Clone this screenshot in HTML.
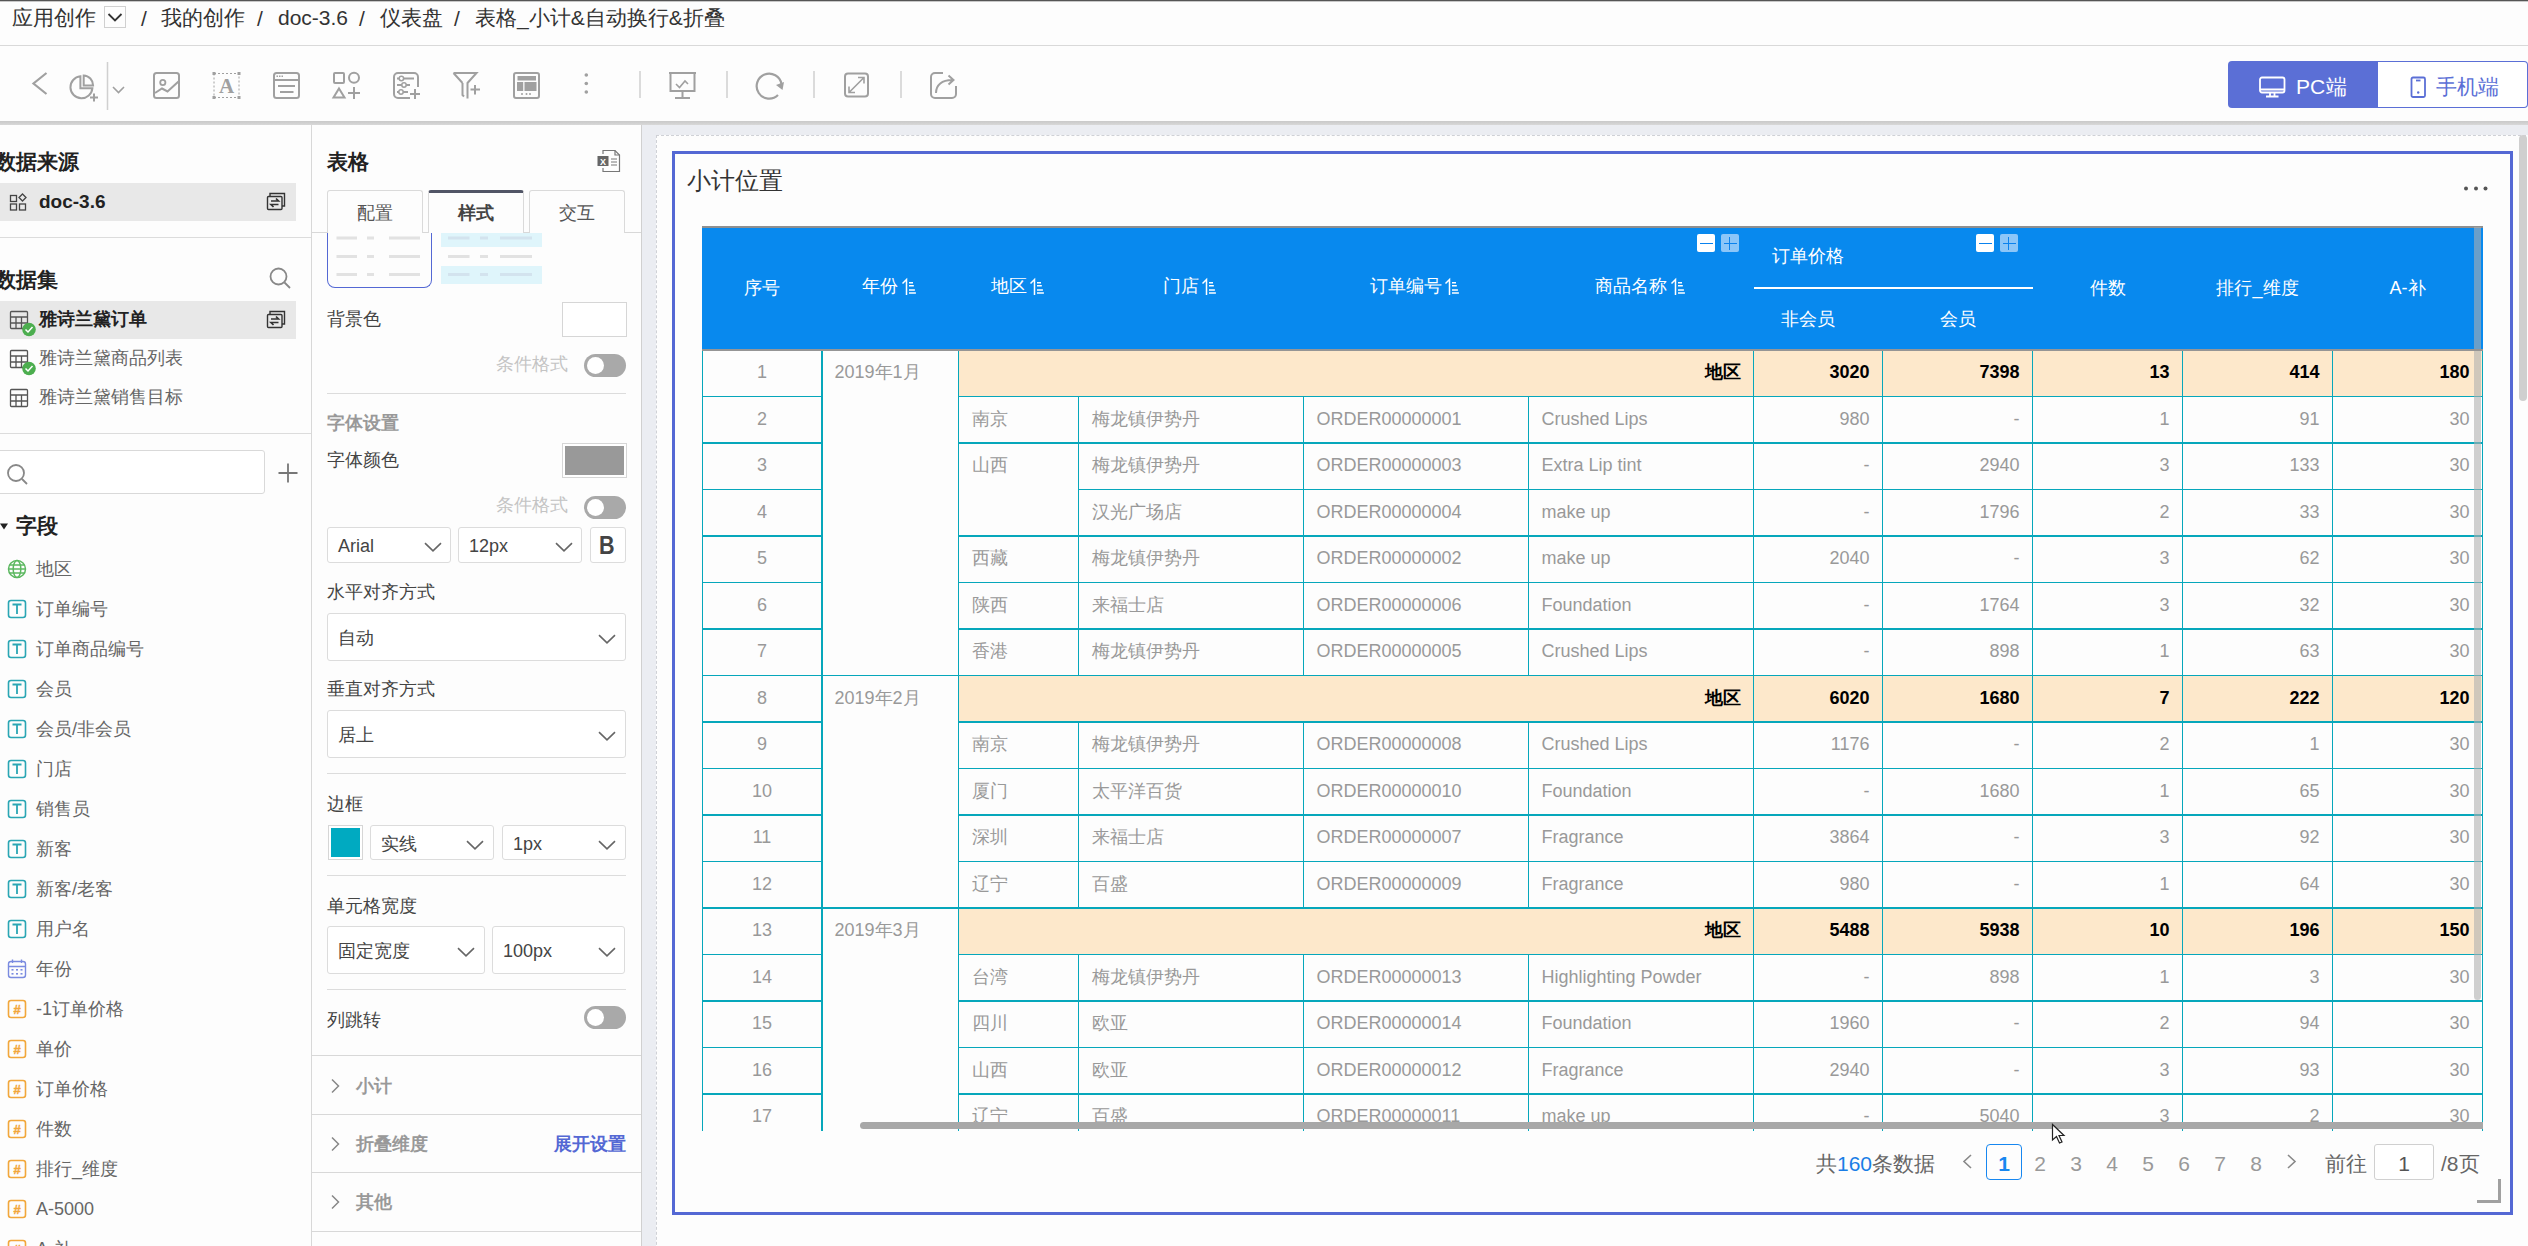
<!DOCTYPE html>
<html><head><meta charset="utf-8">
<style>
html,body{margin:0;padding:0;}
body{width:2528px;height:1246px;overflow:hidden;position:relative;background:#fdfdfd;font-family:"Liberation Sans",sans-serif;color:#333;}
.a{position:absolute;}
.t{position:absolute;white-space:nowrap;line-height:1;}
svg{position:absolute;overflow:visible;}
.ic{stroke:#a0a0a0;fill:none;stroke-width:2;}
.sep{position:absolute;width:2px;background:#d6d6d6;}
/* panels */
.hl{position:absolute;height:1px;background:#dcdcdc;}
.fld{position:absolute;left:36px;font-size:18px;color:#666;white-space:nowrap;line-height:1;}
.sel{position:absolute;border:1px solid #dcdcdc;border-radius:3px;background:#fff;box-sizing:border-box;}
.sel span{position:absolute;left:10px;top:50%;transform:translateY(-50%);font-size:18px;color:#555;line-height:1;}
.chev{position:absolute;width:10px;height:10px;border-right:2px solid #666;border-bottom:2px solid #666;transform:rotate(45deg);}
.lbl{position:absolute;left:327px;font-size:18px;color:#444;line-height:1;white-space:nowrap;}
.tog{position:absolute;left:584px;width:42px;height:23px;border-radius:12px;background:#a9a9a9;}
.tog::after{content:"";position:absolute;left:3px;top:3px;width:17px;height:17px;border-radius:50%;background:#fff;}
/* table */
.vl{position:absolute;width:1px;background:#06a7bb;}
.rl{position:absolute;height:1px;background:#06a7bb;}
.c{position:absolute;font-size:18px;color:#999;white-space:nowrap;line-height:46px;height:46px;}
.r{text-align:right;}
.b{font-weight:bold;color:#000;}
.h{position:absolute;font-size:18px;color:#fff;white-space:nowrap;line-height:1;}
</style></head>
<body>
<!-- TOPBAR -->
<div class="a" style="left:0;top:0;width:2528px;height:1px;background:#555"></div>
<div class="a" style="left:0;top:1px;width:2528px;height:1px;background:#c8c8c8"></div>
<div class="t" style="left:12px;top:7px;font-size:21px;color:#333">应用创作</div>
<div class="a" style="left:104px;top:6px;width:20px;height:20px;border:1px solid #d0d0d0"></div><svg style="left:104px;top:6px" width="22" height="22" viewBox="0 0 22 22"><path d="M4.5 8 L11 14.5 L17.5 8" fill="none" stroke="#333" stroke-width="1.8"/></svg>
<div class="t" style="left:141px;top:8px;font-size:21px;color:#333">/</div>
<div class="t" style="left:161px;top:7px;font-size:21px;color:#333">我的创作</div>
<div class="t" style="left:257px;top:8px;font-size:21px;color:#333">/</div>
<div class="t" style="left:278px;top:7px;font-size:21px;color:#333">doc-3.6</div>
<div class="t" style="left:359px;top:8px;font-size:21px;color:#333">/</div>
<div class="t" style="left:380px;top:7px;font-size:21px;color:#333">仪表盘</div>
<div class="t" style="left:454px;top:8px;font-size:21px;color:#333">/</div>
<div class="t" style="left:475px;top:7px;font-size:21px;color:#333">表格_小计&amp;自动换行&amp;折叠</div>
<div class="a" style="left:0;top:45px;width:2528px;height:1px;background:#d9d9d9"></div>

<!-- TOOLBAR placeholder -->
<svg style="left:0;top:0" width="2528" height="125" viewBox="0 0 2528 125">
<g stroke="#a0a0a0" fill="none" stroke-width="2" stroke-linecap="butt">
<!-- back -->
<path d="M46.5 73 L33.5 83.5 L46.5 94" stroke-width="2.2"/>
<!-- pie + -->
<path d="M80.4 76.3 V88.2 H92.4 A11 11 0 1 1 80.4 76.3 Z"/>
<path d="M83.7 75.5 V85.5 H93.1 A9.6 10 0 0 0 83.7 75.5 Z"/>
<path d="M94 93.5 V101.5 M90 97.5 H98"/>
<!-- chevron -->
<path d="M113 87 L118.5 92.5 L124 87" stroke-width="1.6"/>
<!-- image -->
<rect x="154" y="73" width="25" height="25" rx="2.5"/>
<circle cx="162.8" cy="82.5" r="2.6" stroke-width="1.8"/>
<path d="M155 93 L162 88.5 L167.5 91.5 L178.5 81.5"/>
<!-- text A -->
<rect x="214" y="73.5" width="25" height="24" stroke-width="1" stroke-dasharray="2 2"/>
<!-- list -->
<rect x="274" y="73" width="25" height="25" rx="2.5"/>
<path d="M274 80 H299 M278 86 H295 M280 92 H293.5"/>
<!-- shapes -->
<rect x="334" y="73" width="10" height="10" rx="1"/>
<circle cx="354" cy="77.7" r="5"/>
<path d="M339 88.5 L344.5 97.5 H333.5 Z"/>
<path d="M354 87 V99 M348 93 H360"/>
<!-- sliders -->
<path d="M410 98 H398 A4 4 0 0 1 394 94 V77 A4 4 0 0 1 398 73 H414 A4 4 0 0 1 418 77 V87"/>
<path d="M397 78.5 H414 M397 85 H410 M397 92 H408" stroke-width="1.8"/>
<path d="M415 89 V99 M410 94 H420"/>
<!-- filter -->
<path d="M453.5 73 H476.5 L467.5 83 V98.5 M462.5 83 V95 L464 96.5 M453.5 73 L462.5 83"/>
<path d="M475 85 V94.5 M470.5 89.5 H480"/>
<!-- layout -->
<rect x="514" y="73" width="25" height="25" rx="2"/>
<!-- separators -->
<path d="M107.5 62 V110 M640 71 V98 M727 71 V98 M814 71 V98 M901 71 V98" stroke="#d0d0d0" stroke-width="1.5"/>
<!-- present -->
<path d="M669 73 H696 M670.5 73 V91 H694.5 V73 M682.5 91 V97 M675 98 H690"/>
<path d="M676 84 L679.5 87.5 L685 81 L688 84" stroke-width="1.6"/>
<!-- refresh -->
<path d="M781.5 84 A12.5 12.5 0 1 0 778 95" stroke-width="2.2"/>
<!-- expand -->
<rect x="845" y="73.5" width="23" height="23" rx="3"/>
<path d="M849 92.5 L864 77.5 M858 77.5 H864 V83.5 M849 86.5 V92.5 H855" stroke-width="1.6"/>
<!-- share -->
<path d="M943 73 H935 A4 4 0 0 0 931 77 V94 A4 4 0 0 0 935 98 H952 A4 4 0 0 0 956 94 V86"/>
<path d="M936 93 C936 85 942 80 952 80 M948.5 75.5 L953.5 80 L948.5 84.5"/>
</g>
<g fill="#a0a0a0">
<path d="M784 82 L776 85 L782.5 90 Z"/>
<rect x="517.5" y="76" width="18.5" height="4.5"/>
<rect x="517" y="82" width="6.2" height="9"/>
<rect x="524.5" y="82" width="12" height="9"/>
<circle cx="522" cy="94" r="1"/><circle cx="526.5" cy="94" r="1"/><circle cx="530" cy="94" r="1"/>
<circle cx="586.3" cy="75" r="1.8"/><circle cx="586.3" cy="83.5" r="1.8"/><circle cx="586.3" cy="92" r="1.8"/>
<circle cx="401.4" cy="78.5" r="2.2" fill="#fff" stroke="#a0a0a0" stroke-width="1.5"/>
<circle cx="404" cy="85" r="2.2" fill="#fff" stroke="#a0a0a0" stroke-width="1.5"/>
<circle cx="401" cy="92" r="2.2" fill="#fff" stroke="#a0a0a0" stroke-width="1.5"/>
<rect x="212.5" y="72" width="3" height="3"/><rect x="237.5" y="72" width="3" height="3"/>
<rect x="212.5" y="96" width="3" height="3"/><rect x="237.5" y="96" width="3" height="3"/>
<rect x="276.5" y="75.5" width="1.5" height="1.5"/><rect x="279" y="75.5" width="1.5" height="1.5"/><rect x="281.5" y="75.5" width="1.5" height="1.5"/>
</g>
<text x="226.5" y="93" font-family="Liberation Serif" font-weight="bold" font-size="21" fill="#a0a0a0" text-anchor="middle">A</text>
</svg>
<div class="a" style="left:2228px;top:61px;width:150px;height:47px;background:#5b6fd6;border-radius:4px 0 0 4px"></div>
<div class="a" style="left:2378px;top:61px;width:150px;height:47px;border:1px solid #5b6fd6;border-left:none;border-radius:0 4px 4px 0;box-sizing:border-box;background:#fff"></div>
<svg style="left:2255px;top:74px" width="35" height="25" viewBox="0 0 35 25">
<g fill="none" stroke="#fff" stroke-width="1.8"><rect x="5" y="3.5" width="24.5" height="15" rx="2"/><path d="M5 15.5 H29.5 M15 19 V22 M19.5 19 V22 M11 22.5 H23.5"/></g></svg>
<div class="t" style="left:2296px;top:76px;font-size:21px;color:#fff;word-spacing:-5px">PC 端</div>
<svg style="left:2405px;top:74px" width="25" height="25" viewBox="0 0 25 25">
<g fill="none" stroke="#5b6fd6" stroke-width="1.8"><rect x="6.5" y="3.5" width="13.5" height="19.5" rx="1.5"/><path d="M11 6.5 H15.5"/></g><circle cx="13.2" cy="18.5" r="1.2" fill="#5b6fd6"/></svg>
<div class="t" style="left:2436px;top:76px;font-size:21px;color:#5b6fd6">手机端</div>

<div class="a" style="left:0;top:121px;width:2528px;height:4px;background:linear-gradient(#c9c9c9,#d8d8d8)"></div>

<!-- LEFT PANEL -->
<div class="a" style="left:0;top:125px;width:311px;height:1121px;background:#fdfdfd"></div>
<div class="a" style="left:311px;top:125px;width:1px;height:1121px;background:#d8d8d8"></div>
<div class="t" style="left:-5px;top:151px;font-size:21px;font-weight:bold;color:#222">数据来源</div>
<div class="a" style="left:0;top:183px;width:296px;height:38px;background:#e8e8e8"></div>
<svg style="left:0;top:180px" width="40" height="40" viewBox="0 0 40 40">
<g fill="none" stroke="#444" stroke-width="1.3"><rect x="10.5" y="15.5" width="6" height="6"/><rect x="10.5" y="24" width="6" height="6"/><rect x="19.5" y="24" width="6" height="6"/><path d="M22.5 14 L26 17.5 L22.5 21 L19 17.5 Z"/></g></svg>
<div class="t" style="left:39px;top:192px;font-size:19px;font-weight:bold;color:#222">doc-3.6</div>
<svg style="left:262px;top:188px" width="28" height="28" viewBox="0 0 28 28">
<g fill="none" stroke="#333" stroke-width="1.4"><path d="M8 8 V5.5 H22.5 V18 H20"/><rect x="5.5" y="8.5" width="14.5" height="13" rx="1"/><path d="M9 13 H16.5 L14 10.5 M16.5 16.5 H9 L11.5 19" stroke-width="1.7"/></g></svg>
<div class="a" style="left:0;top:237px;width:311px;height:1px;background:#dcdcdc"></div>
<div class="t" style="left:-5px;top:269px;font-size:21px;font-weight:bold;color:#222">数据集</div>
<svg style="left:266px;top:264px" width="28" height="28" viewBox="0 0 28 28">
<g fill="none" stroke="#888" stroke-width="1.8"><circle cx="12.5" cy="12.5" r="8"/><path d="M18.5 18.5 L24 24"/></g></svg>
<div class="a" style="left:0;top:301px;width:296px;height:38px;background:#e8e8e8"></div>
<svg style="left:0;top:300px" width="40" height="120" viewBox="0 0 40 120">
<g fill="none" stroke="#555" stroke-width="1.3">
<rect x="10.5" y="11.5" width="17" height="17" rx="1"/><path d="M10.5 17 H27.5 M10.5 23 H27.5 M16 17 V28.5 M21.5 17 V28.5"/>
<rect x="10.5" y="50.5" width="17" height="17" rx="1"/><path d="M10.5 56 H27.5 M10.5 62 H27.5 M16 56 V67.5 M21.5 56 V67.5"/>
<rect x="10.5" y="89.5" width="17" height="17" rx="1"/><path d="M10.5 95 H27.5 M10.5 101 H27.5 M16 95 V106.5 M21.5 95 V106.5"/>
</g>
<circle cx="29" cy="29.5" r="6.8" fill="#4cae4f"/><path d="M25.5 29.5 L28 32 L32.5 27" stroke="#fff" stroke-width="1.5" fill="none"/>
<circle cx="29" cy="68.5" r="6.8" fill="#4cae4f"/><path d="M25.5 68.5 L28 71 L32.5 66" stroke="#fff" stroke-width="1.5" fill="none"/>
</svg>
<div class="t" style="left:39px;top:310px;font-size:18px;font-weight:bold;color:#222">雅诗兰黛订单</div>
<svg style="left:262px;top:306px" width="28" height="28" viewBox="0 0 28 28">
<g fill="none" stroke="#333" stroke-width="1.4"><path d="M8 8 V5.5 H22.5 V18 H20"/><rect x="5.5" y="8.5" width="14.5" height="13" rx="1"/><path d="M9 13 H16.5 L14 10.5 M16.5 16.5 H9 L11.5 19" stroke-width="1.7"/></g></svg>
<div class="t" style="left:39px;top:349px;font-size:18px;color:#666">雅诗兰黛商品列表</div>
<div class="t" style="left:39px;top:388px;font-size:18px;color:#666">雅诗兰黛销售目标</div>
<div class="a" style="left:0;top:433px;width:311px;height:1px;background:#dcdcdc"></div>
<div class="a" style="left:-5px;top:450px;width:270px;height:44px;border:1px solid #d9d9d9;border-radius:3px;box-sizing:border-box;background:#fff"></div>
<svg style="left:0;top:458px" width="32" height="32" viewBox="0 0 32 32">
<g fill="none" stroke="#888" stroke-width="1.8"><circle cx="16" cy="15" r="8"/><path d="M22 21 L27 26"/></g></svg>
<svg style="left:272px;top:458px" width="32" height="32" viewBox="0 0 32 32">
<path d="M16 5.5 V24.5 M6.5 15 H25.5" stroke="#777" stroke-width="1.8" fill="none"/></svg>
<svg style="left:0;top:518px" width="12" height="16" viewBox="0 0 12 16"><path d="M0 5.5 H8 L4 11.5 Z" fill="#222"/></svg>
<div class="t" style="left:16px;top:515px;font-size:21px;font-weight:bold;color:#222">字段</div>
<div class="fld" style="top:560px">地区</div>
<svg style="left:0;top:549px" width="40" height="40" viewBox="0 0 40 40"><g fill="none" stroke="#5cb860" stroke-width="1.5"><circle cx="17" cy="20" r="8.5"/><ellipse cx="17" cy="20" rx="3.8" ry="8.5"/><path d="M8.5 20 H25.5 M9.5 16 H24.5 M9.5 24 H24.5"/></g></svg>
<div class="fld" style="top:600px">订单编号</div>
<svg style="left:0;top:589px" width="40" height="40" viewBox="0 0 40 40"><rect x="8.5" y="11.5" width="17" height="17" rx="2.5" fill="none" stroke="#2aa6b4" stroke-width="1.6"/><path d="M12.5 15.5 H21.5 M17 15.5 V25" stroke="#2aa6b4" stroke-width="1.8" fill="none"/></svg>
<div class="fld" style="top:640px">订单商品编号</div>
<svg style="left:0;top:629px" width="40" height="40" viewBox="0 0 40 40"><rect x="8.5" y="11.5" width="17" height="17" rx="2.5" fill="none" stroke="#2aa6b4" stroke-width="1.6"/><path d="M12.5 15.5 H21.5 M17 15.5 V25" stroke="#2aa6b4" stroke-width="1.8" fill="none"/></svg>
<div class="fld" style="top:680px">会员</div>
<svg style="left:0;top:669px" width="40" height="40" viewBox="0 0 40 40"><rect x="8.5" y="11.5" width="17" height="17" rx="2.5" fill="none" stroke="#2aa6b4" stroke-width="1.6"/><path d="M12.5 15.5 H21.5 M17 15.5 V25" stroke="#2aa6b4" stroke-width="1.8" fill="none"/></svg>
<div class="fld" style="top:720px">会员/非会员</div>
<svg style="left:0;top:709px" width="40" height="40" viewBox="0 0 40 40"><rect x="8.5" y="11.5" width="17" height="17" rx="2.5" fill="none" stroke="#2aa6b4" stroke-width="1.6"/><path d="M12.5 15.5 H21.5 M17 15.5 V25" stroke="#2aa6b4" stroke-width="1.8" fill="none"/></svg>
<div class="fld" style="top:760px">门店</div>
<svg style="left:0;top:749px" width="40" height="40" viewBox="0 0 40 40"><rect x="8.5" y="11.5" width="17" height="17" rx="2.5" fill="none" stroke="#2aa6b4" stroke-width="1.6"/><path d="M12.5 15.5 H21.5 M17 15.5 V25" stroke="#2aa6b4" stroke-width="1.8" fill="none"/></svg>
<div class="fld" style="top:800px">销售员</div>
<svg style="left:0;top:789px" width="40" height="40" viewBox="0 0 40 40"><rect x="8.5" y="11.5" width="17" height="17" rx="2.5" fill="none" stroke="#2aa6b4" stroke-width="1.6"/><path d="M12.5 15.5 H21.5 M17 15.5 V25" stroke="#2aa6b4" stroke-width="1.8" fill="none"/></svg>
<div class="fld" style="top:840px">新客</div>
<svg style="left:0;top:829px" width="40" height="40" viewBox="0 0 40 40"><rect x="8.5" y="11.5" width="17" height="17" rx="2.5" fill="none" stroke="#2aa6b4" stroke-width="1.6"/><path d="M12.5 15.5 H21.5 M17 15.5 V25" stroke="#2aa6b4" stroke-width="1.8" fill="none"/></svg>
<div class="fld" style="top:880px">新客/老客</div>
<svg style="left:0;top:869px" width="40" height="40" viewBox="0 0 40 40"><rect x="8.5" y="11.5" width="17" height="17" rx="2.5" fill="none" stroke="#2aa6b4" stroke-width="1.6"/><path d="M12.5 15.5 H21.5 M17 15.5 V25" stroke="#2aa6b4" stroke-width="1.8" fill="none"/></svg>
<div class="fld" style="top:920px">用户名</div>
<svg style="left:0;top:909px" width="40" height="40" viewBox="0 0 40 40"><rect x="8.5" y="11.5" width="17" height="17" rx="2.5" fill="none" stroke="#2aa6b4" stroke-width="1.6"/><path d="M12.5 15.5 H21.5 M17 15.5 V25" stroke="#2aa6b4" stroke-width="1.8" fill="none"/></svg>
<div class="fld" style="top:960px">年份</div>
<svg style="left:0;top:949px" width="40" height="40" viewBox="0 0 40 40"><g fill="none" stroke="#7a8be0" stroke-width="1.4"><rect x="8.5" y="12.5" width="17" height="16" rx="2.5"/><path d="M8.5 17.5 H25.5 M12.5 10.5 V14 M21.5 10.5 V14"/></g><g fill="#7a8be0"><rect x="11.5" y="20" width="2" height="1.6"/><rect x="16" y="20" width="2" height="1.6"/><rect x="20.5" y="20" width="2" height="1.6"/><rect x="11.5" y="24" width="2" height="1.6"/><rect x="16" y="24" width="2" height="1.6"/><rect x="20.5" y="24" width="2" height="1.6"/></g></svg>
<div class="fld" style="top:1000px">-1订单价格</div>
<svg style="left:0;top:989px" width="40" height="40" viewBox="0 0 40 40"><rect x="8.5" y="11.5" width="17" height="17" rx="2.5" fill="none" stroke="#f2a73b" stroke-width="1.6"/><text x="17" y="25" font-family="Liberation Sans" font-weight="bold" font-size="13" fill="#f2a73b" stroke="#f2a73b" stroke-width="0.4" text-anchor="middle">#</text></svg>
<div class="fld" style="top:1040px">单价</div>
<svg style="left:0;top:1029px" width="40" height="40" viewBox="0 0 40 40"><rect x="8.5" y="11.5" width="17" height="17" rx="2.5" fill="none" stroke="#f2a73b" stroke-width="1.6"/><text x="17" y="25" font-family="Liberation Sans" font-weight="bold" font-size="13" fill="#f2a73b" stroke="#f2a73b" stroke-width="0.4" text-anchor="middle">#</text></svg>
<div class="fld" style="top:1080px">订单价格</div>
<svg style="left:0;top:1069px" width="40" height="40" viewBox="0 0 40 40"><rect x="8.5" y="11.5" width="17" height="17" rx="2.5" fill="none" stroke="#f2a73b" stroke-width="1.6"/><text x="17" y="25" font-family="Liberation Sans" font-weight="bold" font-size="13" fill="#f2a73b" stroke="#f2a73b" stroke-width="0.4" text-anchor="middle">#</text></svg>
<div class="fld" style="top:1120px">件数</div>
<svg style="left:0;top:1109px" width="40" height="40" viewBox="0 0 40 40"><rect x="8.5" y="11.5" width="17" height="17" rx="2.5" fill="none" stroke="#f2a73b" stroke-width="1.6"/><text x="17" y="25" font-family="Liberation Sans" font-weight="bold" font-size="13" fill="#f2a73b" stroke="#f2a73b" stroke-width="0.4" text-anchor="middle">#</text></svg>
<div class="fld" style="top:1160px">排行_维度</div>
<svg style="left:0;top:1149px" width="40" height="40" viewBox="0 0 40 40"><rect x="8.5" y="11.5" width="17" height="17" rx="2.5" fill="none" stroke="#f2a73b" stroke-width="1.6"/><text x="17" y="25" font-family="Liberation Sans" font-weight="bold" font-size="13" fill="#f2a73b" stroke="#f2a73b" stroke-width="0.4" text-anchor="middle">#</text></svg>
<div class="fld" style="top:1200px">A-5000</div>
<svg style="left:0;top:1189px" width="40" height="40" viewBox="0 0 40 40"><rect x="8.5" y="11.5" width="17" height="17" rx="2.5" fill="none" stroke="#f2a73b" stroke-width="1.6"/><text x="17" y="25" font-family="Liberation Sans" font-weight="bold" font-size="13" fill="#f2a73b" stroke="#f2a73b" stroke-width="0.4" text-anchor="middle">#</text></svg>
<div class="fld" style="top:1240px">A-补</div>
<svg style="left:0;top:1229px" width="40" height="40" viewBox="0 0 40 40"><rect x="8.5" y="11.5" width="17" height="17" rx="2.5" fill="none" stroke="#f2a73b" stroke-width="1.6"/><text x="17" y="25" font-family="Liberation Sans" font-weight="bold" font-size="13" fill="#f2a73b" stroke="#f2a73b" stroke-width="0.4" text-anchor="middle">#</text></svg>

<!-- MIDDLE PANEL -->
<div class="a" style="left:312px;top:125px;width:329px;height:1121px;background:#fdfdfd"></div>
<div class="a" style="left:641px;top:125px;width:1px;height:1121px;background:#d0d0d0"></div>
<div class="t" style="left:327px;top:151px;font-size:21px;font-weight:bold;color:#222">表格</div>
<svg style="left:594px;top:146px" width="30" height="30" viewBox="0 0 30 30">
<path d="M9 8 V4.5 H21 L25.5 9 V25.5 H9 V22" fill="none" stroke="#777" stroke-width="1.2"/>
<path d="M21 4.5 V9 H25.5" fill="none" stroke="#777" stroke-width="1.2"/>
<rect x="3.5" y="10" width="11" height="10" fill="#666"/>
<text x="9" y="18.5" font-family="Liberation Sans" font-weight="bold" font-size="9" fill="#fff" text-anchor="middle">X</text>
<path d="M17 13 H23 M17 16 H23 M17 19 H23" stroke="#777" stroke-width="1"/>
</svg>
<div class="a" style="left:312px;top:232px;width:329px;height:1px;background:#d8d8d8"></div>
<div class="a" style="left:327px;top:190px;width:96px;height:43px;border:1px solid #dadada;border-bottom:none;border-radius:3px 3px 0 0;box-sizing:border-box;background:#fdfdfd"></div>
<div class="a" style="left:428px;top:190px;width:96px;height:43px;border:1px solid #dadada;border-top:3px solid #515566;border-bottom:none;border-radius:3px 3px 0 0;box-sizing:border-box;background:#fdfdfd"></div>
<div class="a" style="left:529px;top:190px;width:96px;height:43px;border:1px solid #dadada;border-bottom:none;border-radius:3px 3px 0 0;box-sizing:border-box;background:#fdfdfd"></div>
<div class="t" style="left:357px;top:203px;font-size:18px;color:#555;line-height:20px">配置</div>
<div class="t" style="left:458px;top:203px;font-size:18px;font-weight:bold;color:#444;line-height:20px">样式</div>
<div class="t" style="left:559px;top:203px;font-size:18px;color:#555;line-height:20px">交互</div>
<div class="a" style="left:327px;top:233px;width:105px;height:55px;border:1px solid #5468d4;border-top:none;border-radius:0 0 8px 8px;box-sizing:border-box"></div>
<svg style="left:327px;top:233px" width="220" height="60" viewBox="0 0 220 60">
<rect x="114" y="0" width="101" height="14" fill="#dff5fb"/>
<rect x="114" y="33" width="101" height="18" fill="#dff5fb"/>
<g stroke="#e2e2e2" stroke-width="3">
<path d="M9.5 5 H30 M40 5 H47 M62 5 H93 M9.5 23.5 H30 M40 23.5 H47 M62 23.5 H93 M9.5 41.5 H30 M40 41.5 H47 M62 41.5 H93"/>
</g>
<g stroke="#d3e3ee" stroke-width="3">
<path d="M121 5 H142.5 M153 5 H161 M173 5 H205 M121 41.5 H142.5 M153 41.5 H161 M173 41.5 H205"/>
</g>
<path d="M121 23.5 H142.5 M153 23.5 H161 M173 23.5 H205" stroke="#e2e2e2" stroke-width="3"/>
</svg>
<div class="lbl" style="top:310px">背景色</div>
<div class="a" style="left:562px;top:302px;width:65px;height:35px;border:1px solid #d6d6d6;box-sizing:border-box;background:#fff"></div>
<div class="t" style="left:496px;top:355px;font-size:18px;color:#c4c4c4">条件格式</div>
<div class="tog" style="top:354px"></div>
<div class="a" style="left:327px;top:393px;width:299px;height:1px;background:#dcdcdc"></div>
<div class="t" style="left:327px;top:414px;font-size:18px;font-weight:bold;color:#999">字体设置</div>
<div class="lbl" style="top:451px">字体颜色</div>
<div class="a" style="left:562px;top:443px;width:65px;height:35px;border:1px solid #d6d6d6;box-sizing:border-box;background:#fff;padding:2px"><div style="width:100%;height:100%;background:#999"></div></div>
<div class="t" style="left:496px;top:496px;font-size:18px;color:#c4c4c4">条件格式</div>
<div class="tog" style="top:496px"></div>
<div class="sel" style="left:327px;top:527px;width:124px;height:36px"></div><div class="t" style="left:338px;top:536px;font-size:18px;color:#444;line-height:20px">Arial</div><svg style="left:421px;top:535px" width="24" height="24" viewBox="0 0 24 24"><path d="M4.0 8.2 L12 15.8 L20.0 8.2" fill="none" stroke="#666" stroke-width="1.6"/></svg><div class="sel" style="left:458px;top:527px;width:124px;height:36px"></div><div class="t" style="left:469px;top:536px;font-size:18px;color:#444;line-height:20px">12px</div><svg style="left:552px;top:535px" width="24" height="24" viewBox="0 0 24 24"><path d="M4.0 8.2 L12 15.8 L20.0 8.2" fill="none" stroke="#666" stroke-width="1.6"/></svg><div class="sel" style="left:590px;top:527px;width:36px;height:36px"></div><div class="t" style="left:599px;top:533px;font-size:25px;font-weight:bold;color:#444;transform:scaleX(0.86);transform-origin:left">B</div><div class="lbl" style="top:583px">水平对齐方式</div><div class="sel" style="left:327px;top:613px;width:299px;height:48px"></div><div class="t" style="left:338px;top:628px;font-size:18px;color:#444;line-height:20px">自动</div><svg style="left:595px;top:627px" width="24" height="24" viewBox="0 0 24 24"><path d="M4.0 8.2 L12 15.8 L20.0 8.2" fill="none" stroke="#666" stroke-width="1.6"/></svg><div class="lbl" style="top:680px">垂直对齐方式</div><div class="sel" style="left:327px;top:710px;width:299px;height:48px"></div><div class="t" style="left:338px;top:725px;font-size:18px;color:#444;line-height:20px">居上</div><svg style="left:595px;top:724px" width="24" height="24" viewBox="0 0 24 24"><path d="M4.0 8.2 L12 15.8 L20.0 8.2" fill="none" stroke="#666" stroke-width="1.6"/></svg><div class="a" style="left:327px;top:773px;width:299px;height:1px;background:#dcdcdc"></div><div class="lbl" style="top:795px">边框</div><div class="a" style="left:328px;top:825px;width:35px;height:35px;border:1px solid #d6d6d6;box-sizing:border-box;background:#fff;padding:2px"><div style="width:100%;height:100%;background:#00aac1"></div></div><div class="sel" style="left:370px;top:825px;width:124px;height:35px"></div><div class="t" style="left:381px;top:833.5px;font-size:18px;color:#444;line-height:20px">实线</div><svg style="left:463px;top:832.5px" width="24" height="24" viewBox="0 0 24 24"><path d="M4.0 8.2 L12 15.8 L20.0 8.2" fill="none" stroke="#666" stroke-width="1.6"/></svg><div class="sel" style="left:502px;top:825px;width:124px;height:35px"></div><div class="t" style="left:513px;top:833.5px;font-size:18px;color:#444;line-height:20px">1px</div><svg style="left:595px;top:832.5px" width="24" height="24" viewBox="0 0 24 24"><path d="M4.0 8.2 L12 15.8 L20.0 8.2" fill="none" stroke="#666" stroke-width="1.6"/></svg><div class="a" style="left:327px;top:875px;width:299px;height:1px;background:#dcdcdc"></div><div class="lbl" style="top:897px">单元格宽度</div><div class="sel" style="left:327px;top:926px;width:158px;height:48px"></div><div class="t" style="left:338px;top:941px;font-size:18px;color:#444;line-height:20px">固定宽度</div><svg style="left:454px;top:940px" width="24" height="24" viewBox="0 0 24 24"><path d="M4.0 8.2 L12 15.8 L20.0 8.2" fill="none" stroke="#666" stroke-width="1.6"/></svg><div class="sel" style="left:492px;top:926px;width:133px;height:48px"></div><div class="t" style="left:503px;top:941px;font-size:18px;color:#444;line-height:20px">100px</div><svg style="left:595px;top:940px" width="24" height="24" viewBox="0 0 24 24"><path d="M4.0 8.2 L12 15.8 L20.0 8.2" fill="none" stroke="#666" stroke-width="1.6"/></svg><div class="a" style="left:327px;top:989px;width:299px;height:1px;background:#dcdcdc"></div><div class="lbl" style="top:1011px">列跳转</div><div class="tog" style="top:1006px"></div><div class="a" style="left:312px;top:1055px;width:329px;height:1px;background:#d8d8d8"></div><svg style="left:326px;top:1074px" width="20" height="24" viewBox="0 0 20 24"><path d="M6 5.5 L12.5 12 L6 18.5" fill="none" stroke="#888" stroke-width="1.5"/></svg><div class="t" style="left:356px;top:1076px;font-size:18px;font-weight:bold;color:#999;line-height:20px">小计</div><svg style="left:326px;top:1132px" width="20" height="24" viewBox="0 0 20 24"><path d="M6 5.5 L12.5 12 L6 18.5" fill="none" stroke="#888" stroke-width="1.5"/></svg><div class="t" style="left:356px;top:1134px;font-size:18px;font-weight:bold;color:#999;line-height:20px">折叠维度</div><svg style="left:326px;top:1190px" width="20" height="24" viewBox="0 0 20 24"><path d="M6 5.5 L12.5 12 L6 18.5" fill="none" stroke="#888" stroke-width="1.5"/></svg><div class="t" style="left:356px;top:1192px;font-size:18px;font-weight:bold;color:#999;line-height:20px">其他</div><div class="t" style="left:554px;top:1134px;font-size:18px;font-weight:bold;color:#5468d4;line-height:20px">展开设置</div><div class="a" style="left:312px;top:1114px;width:329px;height:1px;background:#d8d8d8"></div><div class="a" style="left:312px;top:1172px;width:329px;height:1px;background:#d8d8d8"></div><div class="a" style="left:312px;top:1231px;width:329px;height:1px;background:#d8d8d8"></div>
<!-- CANVAS -->
<div class="a" style="left:642px;top:125px;width:1886px;height:1121px;background:#ebedf2"></div>
<div class="a" style="left:656px;top:135px;width:1880px;height:1200px;background:#fdfdfd;border:1px dashed #cfd1d6;box-sizing:border-box"></div>
<div class="a" style="left:2519px;top:135px;width:8px;height:266px;background:#cfcfcf;border-radius:4px"></div>
<div class="a" style="left:672px;top:151px;width:1841px;height:1064px;border:3px solid #5468d4;box-sizing:border-box"></div>
<div class="t" style="left:687px;top:169px;font-size:24px;color:#333">小计位置</div>
<svg style="left:2460px;top:180px" width="32" height="16" viewBox="0 0 32 16"><g fill="#555"><circle cx="6" cy="8.5" r="2"/><circle cx="16" cy="8.5" r="2"/><circle cx="25.5" cy="8.5" r="2"/></g></svg>
<div class="a" style="left:702px;top:226px;width:1781px;height:2px;background:#8f8f8f"></div>
<div class="a" style="left:702px;top:228px;width:1781px;height:121px;background:#0889ee"></div>
<div class="a" style="left:702px;top:349px;width:1781px;height:1.5px;background:#8f8f8f"></div>
<div class="h" style="left:762px;top:279px;transform:translateX(-50%)">序号</div>
<div class="h" style="left:862.0px;top:277px">年份</div>
<svg style="left:901.5px;top:278px" width="16" height="20" viewBox="0 0 16 20"><g stroke="#fff" fill="none" stroke-width="1.5"><path d="M4.5 17 V1.5 L0.5 5.5"/><path d="M7 4.7 H11 M7 7.8 H11.8 M7 11.9 H12.9 M7 15 H13.9"/></g></svg>
<div class="h" style="left:990.5px;top:277px">地区</div>
<svg style="left:1030px;top:278px" width="16" height="20" viewBox="0 0 16 20"><g stroke="#fff" fill="none" stroke-width="1.5"><path d="M4.5 17 V1.5 L0.5 5.5"/><path d="M7 4.7 H11 M7 7.8 H11.8 M7 11.9 H12.9 M7 15 H13.9"/></g></svg>
<div class="h" style="left:1162.5px;top:277px">门店</div>
<svg style="left:1202px;top:278px" width="16" height="20" viewBox="0 0 16 20"><g stroke="#fff" fill="none" stroke-width="1.5"><path d="M4.5 17 V1.5 L0.5 5.5"/><path d="M7 4.7 H11 M7 7.8 H11.8 M7 11.9 H12.9 M7 15 H13.9"/></g></svg>
<div class="h" style="left:1369.5px;top:277px">订单编号</div>
<svg style="left:1445px;top:278px" width="16" height="20" viewBox="0 0 16 20"><g stroke="#fff" fill="none" stroke-width="1.5"><path d="M4.5 17 V1.5 L0.5 5.5"/><path d="M7 4.7 H11 M7 7.8 H11.8 M7 11.9 H12.9 M7 15 H13.9"/></g></svg>
<div class="h" style="left:1595.0px;top:277px">商品名称</div>
<svg style="left:1670.5px;top:278px" width="16" height="20" viewBox="0 0 16 20"><g stroke="#fff" fill="none" stroke-width="1.5"><path d="M4.5 17 V1.5 L0.5 5.5"/><path d="M7 4.7 H11 M7 7.8 H11.8 M7 11.9 H12.9 M7 15 H13.9"/></g></svg>
<div class="h" style="left:1771.5px;top:247px">订单价格</div>
<div class="a" style="left:1754px;top:287px;width:279px;height:1.5px;background:#fff"></div>
<div class="h" style="left:1780.5px;top:309.5px">非会员</div>
<div class="h" style="left:1939.5px;top:309.5px">会员</div>
<div class="h" style="left:2107.5px;top:279px;transform:translateX(-50%)">件数</div>
<div class="h" style="left:2257.5px;top:279px;transform:translateX(-50%)">排行_维度</div>
<div class="h" style="left:2407.5px;top:279px;transform:translateX(-50%)">A-补</div>
<div class="a" style="left:1697px;top:234px;width:18px;height:18px;background:#fff;border-radius:2px"></div><div class="a" style="left:1699.5px;top:242.6px;width:13px;height:1.4px;background:#0a82ee"></div><div class="a" style="left:1721px;top:234px;width:18px;height:18px;background:#8cc6f8;border-radius:2px"></div><div class="a" style="left:1724px;top:242.6px;width:12.5px;height:1.3px;background:#0a82ee"></div><div class="a" style="left:1728.6px;top:237px;width:1.3px;height:12.5px;background:#0a82ee"></div>
<div class="a" style="left:1976px;top:234px;width:18px;height:18px;background:#fff;border-radius:2px"></div><div class="a" style="left:1978.5px;top:242.6px;width:13px;height:1.4px;background:#0a82ee"></div><div class="a" style="left:2000px;top:234px;width:18px;height:18px;background:#8cc6f8;border-radius:2px"></div><div class="a" style="left:2003px;top:242.6px;width:12.5px;height:1.3px;background:#0a82ee"></div><div class="a" style="left:2007.6px;top:237px;width:1.3px;height:12.5px;background:#0a82ee"></div>
<div class="a" style="left:959px;top:350.0px;width:1523.5px;height:46.5px;background:#fde8cb"></div>
<div class="a" style="left:959px;top:675.5px;width:1523.5px;height:46.5px;background:#fde8cb"></div>
<div class="a" style="left:959px;top:908.0px;width:1523.5px;height:46.5px;background:#fde8cb"></div>
<div class="rl" style="left:702px;top:396px;width:121px;height:1px"></div>
<div class="rl" style="left:958px;top:396px;width:1525px;height:1px"></div>
<div class="rl" style="left:702px;top:442.0px;width:121px;height:2px"></div>
<div class="rl" style="left:958px;top:442.0px;width:1525px;height:2px"></div>
<div class="rl" style="left:702px;top:489px;width:121px;height:1px"></div>
<div class="rl" style="left:1078px;top:489px;width:1405px;height:1px"></div>
<div class="rl" style="left:702px;top:535.0px;width:121px;height:2px"></div>
<div class="rl" style="left:958px;top:535.0px;width:1525px;height:2px"></div>
<div class="rl" style="left:702px;top:582px;width:121px;height:1px"></div>
<div class="rl" style="left:958px;top:582px;width:1525px;height:1px"></div>
<div class="rl" style="left:702px;top:628.0px;width:121px;height:2px"></div>
<div class="rl" style="left:958px;top:628.0px;width:1525px;height:2px"></div>
<div class="rl" style="left:702px;top:675px;width:121px;height:1px"></div>
<div class="rl" style="left:822px;top:675px;width:137px;height:1px"></div>
<div class="rl" style="left:958px;top:675px;width:1525px;height:1px"></div>
<div class="rl" style="left:702px;top:721.0px;width:121px;height:2px"></div>
<div class="rl" style="left:958px;top:721.0px;width:1525px;height:2px"></div>
<div class="rl" style="left:702px;top:768px;width:121px;height:1px"></div>
<div class="rl" style="left:958px;top:768px;width:1525px;height:1px"></div>
<div class="rl" style="left:702px;top:814.0px;width:121px;height:2px"></div>
<div class="rl" style="left:958px;top:814.0px;width:1525px;height:2px"></div>
<div class="rl" style="left:702px;top:861px;width:121px;height:1px"></div>
<div class="rl" style="left:958px;top:861px;width:1525px;height:1px"></div>
<div class="rl" style="left:702px;top:907.0px;width:121px;height:2px"></div>
<div class="rl" style="left:822px;top:907.0px;width:137px;height:2px"></div>
<div class="rl" style="left:958px;top:907.0px;width:1525px;height:2px"></div>
<div class="rl" style="left:702px;top:954px;width:121px;height:1px"></div>
<div class="rl" style="left:958px;top:954px;width:1525px;height:1px"></div>
<div class="rl" style="left:702px;top:1000.0px;width:121px;height:2px"></div>
<div class="rl" style="left:958px;top:1000.0px;width:1525px;height:2px"></div>
<div class="rl" style="left:702px;top:1047px;width:121px;height:1px"></div>
<div class="rl" style="left:958px;top:1047px;width:1525px;height:1px"></div>
<div class="rl" style="left:702px;top:1093.0px;width:121px;height:2px"></div>
<div class="rl" style="left:958px;top:1093.0px;width:1525px;height:2px"></div>
<div class="vl" style="left:702px;top:350px;width:1px;height:780.5999999999999px"></div>
<div class="vl" style="left:821px;top:350px;width:2px;height:780.5999999999999px"></div>
<div class="vl" style="left:958px;top:350px;width:1px;height:780.5999999999999px"></div>
<div class="vl" style="left:2482px;top:350px;width:1px;height:780.5999999999999px"></div>
<div class="vl" style="left:1753px;top:350px;width:1px;height:780.5999999999999px"></div>
<div class="vl" style="left:1882px;top:350px;width:1px;height:780.5999999999999px"></div>
<div class="vl" style="left:2032px;top:350px;width:1px;height:780.5999999999999px"></div>
<div class="vl" style="left:2182px;top:350px;width:1px;height:780.5999999999999px"></div>
<div class="vl" style="left:2332px;top:350px;width:1px;height:780.5999999999999px"></div>
<div class="vl" style="left:1078px;top:396.5px;width:1px;height:279.0px"></div>
<div class="vl" style="left:1078px;top:722.0px;width:1px;height:186.0px"></div>
<div class="vl" style="left:1078px;top:954.5px;width:1px;height:176.0999999999999px"></div>
<div class="vl" style="left:1303px;top:396.5px;width:1px;height:279.0px"></div>
<div class="vl" style="left:1303px;top:722.0px;width:1px;height:186.0px"></div>
<div class="vl" style="left:1303px;top:954.5px;width:1px;height:176.0999999999999px"></div>
<div class="vl" style="left:1528px;top:396.5px;width:1px;height:279.0px"></div>
<div class="vl" style="left:1528px;top:722.0px;width:1px;height:186.0px"></div>
<div class="vl" style="left:1528px;top:954.5px;width:1px;height:176.0999999999999px"></div>
<div class="c" style="left:762px;top:354px;line-height:36px;height:36px;transform:translateX(-50%)">1</div>
<div class="c" style="left:834.5px;top:354px;line-height:36px;height:36px">2019年1月</div>
<div class="c b" style="right:787.5px;top:354px;line-height:36px;height:36px">地区</div>
<div class="c b" style="right:658.5px;top:354px;line-height:36px;height:36px">3020</div>
<div class="c b" style="right:508.5px;top:354px;line-height:36px;height:36px">7398</div>
<div class="c b" style="right:358.5px;top:354px;line-height:36px;height:36px">13</div>
<div class="c b" style="right:208.5px;top:354px;line-height:36px;height:36px">414</div>
<div class="c b" style="right:58.5px;top:354px;line-height:36px;height:36px">180</div>
<div class="c" style="left:762px;top:400.5px;line-height:36px;height:36px;transform:translateX(-50%)">2</div>
<div class="c" style="left:972px;top:400.5px;line-height:36px;height:36px">南京</div>
<div class="c" style="left:1092px;top:400.5px;line-height:36px;height:36px">梅龙镇伊势丹</div>
<div class="c" style="left:1316.5px;top:400.5px;line-height:36px;height:36px">ORDER00000001</div>
<div class="c" style="left:1541.5px;top:400.5px;line-height:36px;height:36px">Crushed Lips</div>
<div class="c" style="right:658.5px;top:400.5px;line-height:36px;height:36px">980</div>
<div class="c" style="right:508.5px;top:400.5px;line-height:36px;height:36px">-</div>
<div class="c" style="right:358.5px;top:400.5px;line-height:36px;height:36px">1</div>
<div class="c" style="right:208.5px;top:400.5px;line-height:36px;height:36px">91</div>
<div class="c" style="right:58.5px;top:400.5px;line-height:36px;height:36px">30</div>
<div class="c" style="left:762px;top:447px;line-height:36px;height:36px;transform:translateX(-50%)">3</div>
<div class="c" style="left:972px;top:447px;line-height:36px;height:36px">山西</div>
<div class="c" style="left:1092px;top:447px;line-height:36px;height:36px">梅龙镇伊势丹</div>
<div class="c" style="left:1316.5px;top:447px;line-height:36px;height:36px">ORDER00000003</div>
<div class="c" style="left:1541.5px;top:447px;line-height:36px;height:36px">Extra Lip tint</div>
<div class="c" style="right:658.5px;top:447px;line-height:36px;height:36px">-</div>
<div class="c" style="right:508.5px;top:447px;line-height:36px;height:36px">2940</div>
<div class="c" style="right:358.5px;top:447px;line-height:36px;height:36px">3</div>
<div class="c" style="right:208.5px;top:447px;line-height:36px;height:36px">133</div>
<div class="c" style="right:58.5px;top:447px;line-height:36px;height:36px">30</div>
<div class="c" style="left:762px;top:493.5px;line-height:36px;height:36px;transform:translateX(-50%)">4</div>
<div class="c" style="left:1092px;top:493.5px;line-height:36px;height:36px">汉光广场店</div>
<div class="c" style="left:1316.5px;top:493.5px;line-height:36px;height:36px">ORDER00000004</div>
<div class="c" style="left:1541.5px;top:493.5px;line-height:36px;height:36px">make up</div>
<div class="c" style="right:658.5px;top:493.5px;line-height:36px;height:36px">-</div>
<div class="c" style="right:508.5px;top:493.5px;line-height:36px;height:36px">1796</div>
<div class="c" style="right:358.5px;top:493.5px;line-height:36px;height:36px">2</div>
<div class="c" style="right:208.5px;top:493.5px;line-height:36px;height:36px">33</div>
<div class="c" style="right:58.5px;top:493.5px;line-height:36px;height:36px">30</div>
<div class="c" style="left:762px;top:540px;line-height:36px;height:36px;transform:translateX(-50%)">5</div>
<div class="c" style="left:972px;top:540px;line-height:36px;height:36px">西藏</div>
<div class="c" style="left:1092px;top:540px;line-height:36px;height:36px">梅龙镇伊势丹</div>
<div class="c" style="left:1316.5px;top:540px;line-height:36px;height:36px">ORDER00000002</div>
<div class="c" style="left:1541.5px;top:540px;line-height:36px;height:36px">make up</div>
<div class="c" style="right:658.5px;top:540px;line-height:36px;height:36px">2040</div>
<div class="c" style="right:508.5px;top:540px;line-height:36px;height:36px">-</div>
<div class="c" style="right:358.5px;top:540px;line-height:36px;height:36px">3</div>
<div class="c" style="right:208.5px;top:540px;line-height:36px;height:36px">62</div>
<div class="c" style="right:58.5px;top:540px;line-height:36px;height:36px">30</div>
<div class="c" style="left:762px;top:586.5px;line-height:36px;height:36px;transform:translateX(-50%)">6</div>
<div class="c" style="left:972px;top:586.5px;line-height:36px;height:36px">陕西</div>
<div class="c" style="left:1092px;top:586.5px;line-height:36px;height:36px">来福士店</div>
<div class="c" style="left:1316.5px;top:586.5px;line-height:36px;height:36px">ORDER00000006</div>
<div class="c" style="left:1541.5px;top:586.5px;line-height:36px;height:36px">Foundation</div>
<div class="c" style="right:658.5px;top:586.5px;line-height:36px;height:36px">-</div>
<div class="c" style="right:508.5px;top:586.5px;line-height:36px;height:36px">1764</div>
<div class="c" style="right:358.5px;top:586.5px;line-height:36px;height:36px">3</div>
<div class="c" style="right:208.5px;top:586.5px;line-height:36px;height:36px">32</div>
<div class="c" style="right:58.5px;top:586.5px;line-height:36px;height:36px">30</div>
<div class="c" style="left:762px;top:633px;line-height:36px;height:36px;transform:translateX(-50%)">7</div>
<div class="c" style="left:972px;top:633px;line-height:36px;height:36px">香港</div>
<div class="c" style="left:1092px;top:633px;line-height:36px;height:36px">梅龙镇伊势丹</div>
<div class="c" style="left:1316.5px;top:633px;line-height:36px;height:36px">ORDER00000005</div>
<div class="c" style="left:1541.5px;top:633px;line-height:36px;height:36px">Crushed Lips</div>
<div class="c" style="right:658.5px;top:633px;line-height:36px;height:36px">-</div>
<div class="c" style="right:508.5px;top:633px;line-height:36px;height:36px">898</div>
<div class="c" style="right:358.5px;top:633px;line-height:36px;height:36px">1</div>
<div class="c" style="right:208.5px;top:633px;line-height:36px;height:36px">63</div>
<div class="c" style="right:58.5px;top:633px;line-height:36px;height:36px">30</div>
<div class="c" style="left:762px;top:679.5px;line-height:36px;height:36px;transform:translateX(-50%)">8</div>
<div class="c" style="left:834.5px;top:679.5px;line-height:36px;height:36px">2019年2月</div>
<div class="c b" style="right:787.5px;top:679.5px;line-height:36px;height:36px">地区</div>
<div class="c b" style="right:658.5px;top:679.5px;line-height:36px;height:36px">6020</div>
<div class="c b" style="right:508.5px;top:679.5px;line-height:36px;height:36px">1680</div>
<div class="c b" style="right:358.5px;top:679.5px;line-height:36px;height:36px">7</div>
<div class="c b" style="right:208.5px;top:679.5px;line-height:36px;height:36px">222</div>
<div class="c b" style="right:58.5px;top:679.5px;line-height:36px;height:36px">120</div>
<div class="c" style="left:762px;top:726px;line-height:36px;height:36px;transform:translateX(-50%)">9</div>
<div class="c" style="left:972px;top:726px;line-height:36px;height:36px">南京</div>
<div class="c" style="left:1092px;top:726px;line-height:36px;height:36px">梅龙镇伊势丹</div>
<div class="c" style="left:1316.5px;top:726px;line-height:36px;height:36px">ORDER00000008</div>
<div class="c" style="left:1541.5px;top:726px;line-height:36px;height:36px">Crushed Lips</div>
<div class="c" style="right:658.5px;top:726px;line-height:36px;height:36px">1176</div>
<div class="c" style="right:508.5px;top:726px;line-height:36px;height:36px">-</div>
<div class="c" style="right:358.5px;top:726px;line-height:36px;height:36px">2</div>
<div class="c" style="right:208.5px;top:726px;line-height:36px;height:36px">1</div>
<div class="c" style="right:58.5px;top:726px;line-height:36px;height:36px">30</div>
<div class="c" style="left:762px;top:772.5px;line-height:36px;height:36px;transform:translateX(-50%)">10</div>
<div class="c" style="left:972px;top:772.5px;line-height:36px;height:36px">厦门</div>
<div class="c" style="left:1092px;top:772.5px;line-height:36px;height:36px">太平洋百货</div>
<div class="c" style="left:1316.5px;top:772.5px;line-height:36px;height:36px">ORDER00000010</div>
<div class="c" style="left:1541.5px;top:772.5px;line-height:36px;height:36px">Foundation</div>
<div class="c" style="right:658.5px;top:772.5px;line-height:36px;height:36px">-</div>
<div class="c" style="right:508.5px;top:772.5px;line-height:36px;height:36px">1680</div>
<div class="c" style="right:358.5px;top:772.5px;line-height:36px;height:36px">1</div>
<div class="c" style="right:208.5px;top:772.5px;line-height:36px;height:36px">65</div>
<div class="c" style="right:58.5px;top:772.5px;line-height:36px;height:36px">30</div>
<div class="c" style="left:762px;top:819px;line-height:36px;height:36px;transform:translateX(-50%)">11</div>
<div class="c" style="left:972px;top:819px;line-height:36px;height:36px">深圳</div>
<div class="c" style="left:1092px;top:819px;line-height:36px;height:36px">来福士店</div>
<div class="c" style="left:1316.5px;top:819px;line-height:36px;height:36px">ORDER00000007</div>
<div class="c" style="left:1541.5px;top:819px;line-height:36px;height:36px">Fragrance</div>
<div class="c" style="right:658.5px;top:819px;line-height:36px;height:36px">3864</div>
<div class="c" style="right:508.5px;top:819px;line-height:36px;height:36px">-</div>
<div class="c" style="right:358.5px;top:819px;line-height:36px;height:36px">3</div>
<div class="c" style="right:208.5px;top:819px;line-height:36px;height:36px">92</div>
<div class="c" style="right:58.5px;top:819px;line-height:36px;height:36px">30</div>
<div class="c" style="left:762px;top:865.5px;line-height:36px;height:36px;transform:translateX(-50%)">12</div>
<div class="c" style="left:972px;top:865.5px;line-height:36px;height:36px">辽宁</div>
<div class="c" style="left:1092px;top:865.5px;line-height:36px;height:36px">百盛</div>
<div class="c" style="left:1316.5px;top:865.5px;line-height:36px;height:36px">ORDER00000009</div>
<div class="c" style="left:1541.5px;top:865.5px;line-height:36px;height:36px">Fragrance</div>
<div class="c" style="right:658.5px;top:865.5px;line-height:36px;height:36px">980</div>
<div class="c" style="right:508.5px;top:865.5px;line-height:36px;height:36px">-</div>
<div class="c" style="right:358.5px;top:865.5px;line-height:36px;height:36px">1</div>
<div class="c" style="right:208.5px;top:865.5px;line-height:36px;height:36px">64</div>
<div class="c" style="right:58.5px;top:865.5px;line-height:36px;height:36px">30</div>
<div class="c" style="left:762px;top:912px;line-height:36px;height:36px;transform:translateX(-50%)">13</div>
<div class="c" style="left:834.5px;top:912px;line-height:36px;height:36px">2019年3月</div>
<div class="c b" style="right:787.5px;top:912px;line-height:36px;height:36px">地区</div>
<div class="c b" style="right:658.5px;top:912px;line-height:36px;height:36px">5488</div>
<div class="c b" style="right:508.5px;top:912px;line-height:36px;height:36px">5938</div>
<div class="c b" style="right:358.5px;top:912px;line-height:36px;height:36px">10</div>
<div class="c b" style="right:208.5px;top:912px;line-height:36px;height:36px">196</div>
<div class="c b" style="right:58.5px;top:912px;line-height:36px;height:36px">150</div>
<div class="c" style="left:762px;top:958.5px;line-height:36px;height:36px;transform:translateX(-50%)">14</div>
<div class="c" style="left:972px;top:958.5px;line-height:36px;height:36px">台湾</div>
<div class="c" style="left:1092px;top:958.5px;line-height:36px;height:36px">梅龙镇伊势丹</div>
<div class="c" style="left:1316.5px;top:958.5px;line-height:36px;height:36px">ORDER00000013</div>
<div class="c" style="left:1541.5px;top:958.5px;line-height:36px;height:36px">Highlighting Powder</div>
<div class="c" style="right:658.5px;top:958.5px;line-height:36px;height:36px">-</div>
<div class="c" style="right:508.5px;top:958.5px;line-height:36px;height:36px">898</div>
<div class="c" style="right:358.5px;top:958.5px;line-height:36px;height:36px">1</div>
<div class="c" style="right:208.5px;top:958.5px;line-height:36px;height:36px">3</div>
<div class="c" style="right:58.5px;top:958.5px;line-height:36px;height:36px">30</div>
<div class="c" style="left:762px;top:1005px;line-height:36px;height:36px;transform:translateX(-50%)">15</div>
<div class="c" style="left:972px;top:1005px;line-height:36px;height:36px">四川</div>
<div class="c" style="left:1092px;top:1005px;line-height:36px;height:36px">欧亚</div>
<div class="c" style="left:1316.5px;top:1005px;line-height:36px;height:36px">ORDER00000014</div>
<div class="c" style="left:1541.5px;top:1005px;line-height:36px;height:36px">Foundation</div>
<div class="c" style="right:658.5px;top:1005px;line-height:36px;height:36px">1960</div>
<div class="c" style="right:508.5px;top:1005px;line-height:36px;height:36px">-</div>
<div class="c" style="right:358.5px;top:1005px;line-height:36px;height:36px">2</div>
<div class="c" style="right:208.5px;top:1005px;line-height:36px;height:36px">94</div>
<div class="c" style="right:58.5px;top:1005px;line-height:36px;height:36px">30</div>
<div class="c" style="left:762px;top:1051.5px;line-height:36px;height:36px;transform:translateX(-50%)">16</div>
<div class="c" style="left:972px;top:1051.5px;line-height:36px;height:36px">山西</div>
<div class="c" style="left:1092px;top:1051.5px;line-height:36px;height:36px">欧亚</div>
<div class="c" style="left:1316.5px;top:1051.5px;line-height:36px;height:36px">ORDER00000012</div>
<div class="c" style="left:1541.5px;top:1051.5px;line-height:36px;height:36px">Fragrance</div>
<div class="c" style="right:658.5px;top:1051.5px;line-height:36px;height:36px">2940</div>
<div class="c" style="right:508.5px;top:1051.5px;line-height:36px;height:36px">-</div>
<div class="c" style="right:358.5px;top:1051.5px;line-height:36px;height:36px">3</div>
<div class="c" style="right:208.5px;top:1051.5px;line-height:36px;height:36px">93</div>
<div class="c" style="right:58.5px;top:1051.5px;line-height:36px;height:36px">30</div>
<div class="c" style="left:762px;top:1098px;line-height:36px;height:36px;transform:translateX(-50%)">17</div>
<div class="c" style="left:972px;top:1098px;line-height:36px;height:36px">辽宁</div>
<div class="c" style="left:1092px;top:1098px;line-height:36px;height:36px">百盛</div>
<div class="c" style="left:1316.5px;top:1098px;line-height:36px;height:36px">ORDER00000011</div>
<div class="c" style="left:1541.5px;top:1098px;line-height:36px;height:36px">make up</div>
<div class="c" style="right:658.5px;top:1098px;line-height:36px;height:36px">-</div>
<div class="c" style="right:508.5px;top:1098px;line-height:36px;height:36px">5040</div>
<div class="c" style="right:358.5px;top:1098px;line-height:36px;height:36px">3</div>
<div class="c" style="right:208.5px;top:1098px;line-height:36px;height:36px">2</div>
<div class="c" style="right:58.5px;top:1098px;line-height:36px;height:36px">30</div>
<div class="a" style="left:690px;top:1130.6px;width:1810px;height:75px;background:#fdfdfd"></div>
<div class="a" style="left:2474px;top:227px;width:7px;height:773px;background:rgba(175,175,175,0.59);border-radius:0 0 4px 4px"></div>
<div class="a" style="left:860px;top:1122px;width:1623px;height:7px;background:#a8a8a8;border-radius:4px 0 0 4px"></div>
<div class="t" style="left:1816px;top:1153px;font-size:21px;color:#666">共<span style="color:#1a7de6">160</span>条数据</div>
<svg style="left:1958px;top:1150px" width="20" height="26" viewBox="0 0 20 26"><path d="M13 5 L6 11.5 L13 18" fill="none" stroke="#888" stroke-width="1.6"/></svg>
<div class="a" style="left:1986px;top:1144px;width:36px;height:36px;border:1.5px solid #1787f0;border-radius:4px;box-sizing:border-box"></div>
<div class="t" style="left:2004px;top:1153px;font-size:21px;font-weight:bold;color:#1787f0;transform:translateX(-50%)">1</div>
<div class="t" style="left:2040px;top:1153px;font-size:21px;color:#999;transform:translateX(-50%)">2</div>
<div class="t" style="left:2076px;top:1153px;font-size:21px;color:#999;transform:translateX(-50%)">3</div>
<div class="t" style="left:2112px;top:1153px;font-size:21px;color:#999;transform:translateX(-50%)">4</div>
<div class="t" style="left:2148px;top:1153px;font-size:21px;color:#999;transform:translateX(-50%)">5</div>
<div class="t" style="left:2184px;top:1153px;font-size:21px;color:#999;transform:translateX(-50%)">6</div>
<div class="t" style="left:2220px;top:1153px;font-size:21px;color:#999;transform:translateX(-50%)">7</div>
<div class="t" style="left:2256px;top:1153px;font-size:21px;color:#999;transform:translateX(-50%)">8</div>
<svg style="left:2282px;top:1150px" width="20" height="26" viewBox="0 0 20 26"><path d="M6 5 L13 11.5 L6 18" fill="none" stroke="#888" stroke-width="1.6"/></svg>
<div class="t" style="left:2325px;top:1153px;font-size:21px;color:#666">前往</div>
<div class="a" style="left:2374px;top:1144px;width:60px;height:36px;border:1px solid #d0d0d0;border-radius:3px;box-sizing:border-box;background:#fff"></div>
<div class="t" style="left:2404px;top:1153px;font-size:21px;color:#555;transform:translateX(-50%)">1</div>
<div class="t" style="left:2441px;top:1153px;font-size:21px;color:#666">/8页</div>
<div class="a" style="left:2498px;top:1179px;width:3px;height:23.5px;background:#a0a0a0"></div>
<div class="a" style="left:2477px;top:1199.5px;width:24px;height:3px;background:#a0a0a0"></div>
<svg style="left:2050px;top:1123px" width="20" height="24" viewBox="0 0 20 24"><path d="M2.5 1.5 V17 L6.5 13.5 L9.5 20 L12 19 L9 12.5 H14 Z" fill="#fff" stroke="#222" stroke-width="1.2"/></svg>
<div class="a" style="left:702px;top:349px;width:1781px;height:2px;background:#959595"></div>
</body></html>
